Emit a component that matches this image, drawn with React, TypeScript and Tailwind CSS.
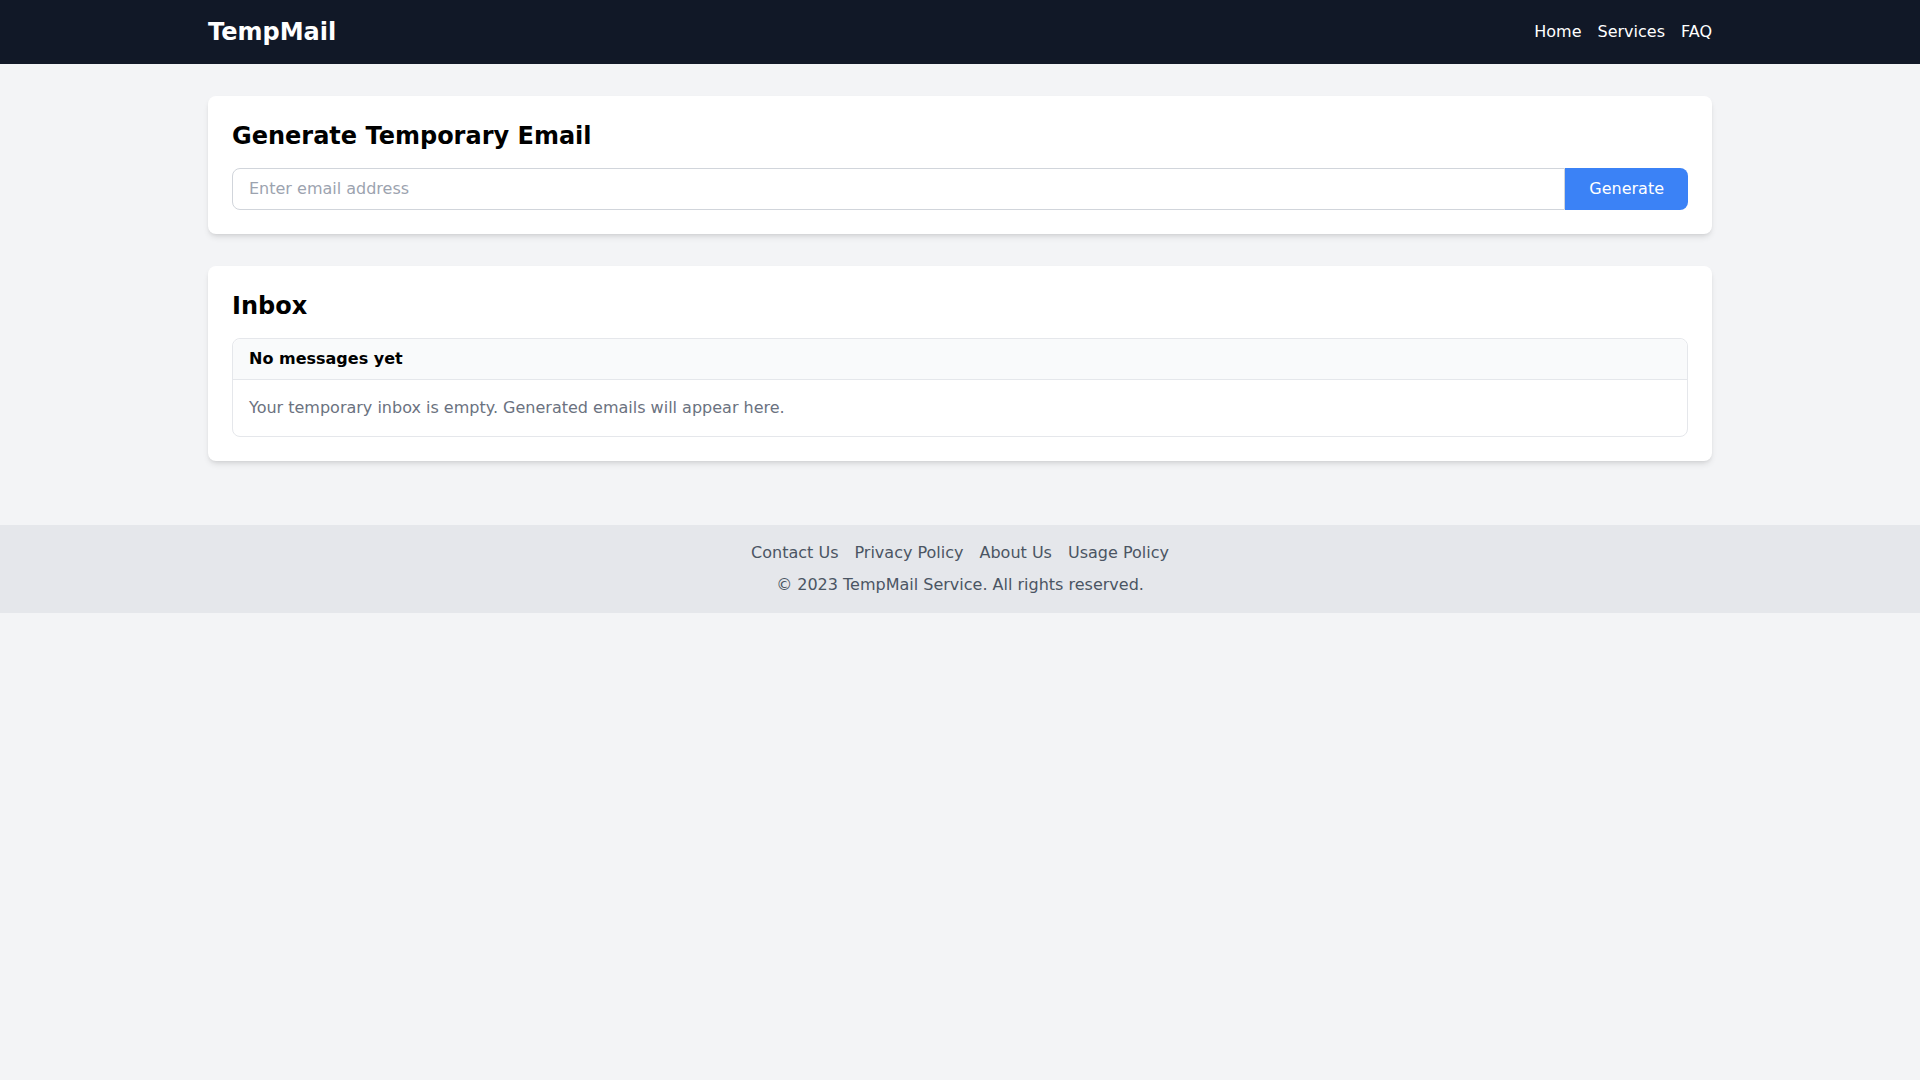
export default function App() {
  const footerLinks = ['Contact Us', 'Privacy Policy', 'About Us', 'Usage Policy'];

  return (
    <div className="min-h-screen bg-[#f3f4f6] font-['DejaVu_Sans',sans-serif]">
      {/* Navbar */}
      <nav className="bg-[#111827] text-white">
        <div className="container mx-auto px-4 py-4 flex items-center justify-between">
          <span className="text-2xl font-bold">TempMail</span>
          <div className="flex space-x-4">
            <a href="#">Home</a>
            <a href="#">Services</a>
            <a href="#">FAQ</a>
          </div>
        </div>
      </nav>

      {/* Main */}
      <main className="container mx-auto px-4 py-8">
        <section className="bg-white rounded-lg shadow-md p-6">
          <h2 className="text-2xl font-bold mb-4">Generate Temporary Email</h2>
          <div className="flex">
            <input
              type="text"
              placeholder="Enter email address"
              className="flex-1 px-4 py-2 border border-[#d1d5db] rounded-l-lg placeholder-[#9ca3af] outline-none"
            />
            <button className="bg-[#3b82f6] text-white px-6 py-2 rounded-r-lg">Generate</button>
          </div>
        </section>

        <section className="bg-white rounded-lg shadow-md p-6 mt-8">
          <h2 className="text-2xl font-bold mb-4">Inbox</h2>
          <div className="border border-[#e5e7eb] rounded-lg">
            <div className="bg-[#f9fafb] px-4 py-2 border-b border-[#e5e7eb] rounded-t-lg">
              <h3 className="font-bold">No messages yet</h3>
            </div>
            <div className="p-4">
              <p className="text-[#6b7280]">Your temporary inbox is empty. Generated emails will appear here.</p>
            </div>
          </div>
        </section>
      </main>

      {/* Footer */}
      <footer className="bg-[#e5e7eb] py-4 mt-8">
        <div className="container mx-auto px-4 text-center text-[#4b5563]">
          <div className="flex justify-center space-x-4">
            {footerLinks.map((l) => (
              <a key={l} href="#">
                {l}
              </a>
            ))}
          </div>
          <p className="mt-2">© 2023 TempMail Service. All rights reserved.</p>
        </div>
      </footer>
    </div>
  );
}
